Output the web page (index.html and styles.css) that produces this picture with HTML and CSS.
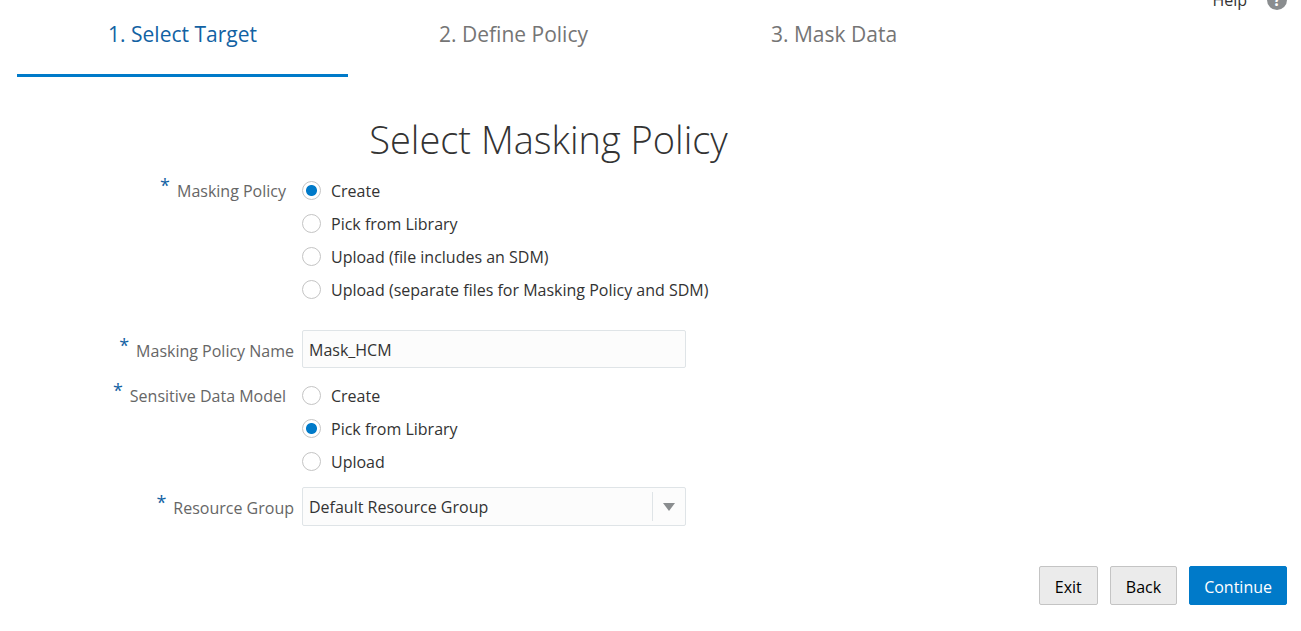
FILE: index.html
```html
<!DOCTYPE html>
<html lang="en">
<head>
<meta charset="utf-8">
<title>Select Masking Policy</title>
<link rel="stylesheet" href="styles.css">
</head>
<body>
<header class="topbar">
  <a class="help-link" href="#">Help</a>
  <button class="help-icon" type="button" aria-label="Help topics">?</button>
</header>
<nav class="steps" aria-label="Progress">
  <a class="step step-current" href="#" aria-current="step">1. Select Target</a>
  <a class="step" href="#">2. Define Policy</a>
  <a class="step" href="#">3. Mask Data</a>
</nav>
<main>
  <h1 class="title">Select Masking Policy</h1>
  <form class="form">
    <div class="row" role="radiogroup" aria-labelledby="policy-label">
      <span class="label group-label" id="policy-label"><span class="star">*</span>Masking Policy</span>
      <div class="options">
        <label class="option"><input class="radio" type="radio" name="policy" checked>Create</label>
        <label class="option"><input class="radio" type="radio" name="policy">Pick from Library</label>
        <label class="option"><input class="radio" type="radio" name="policy">Upload (file includes an SDM)</label>
        <label class="option"><input class="radio" type="radio" name="policy">Upload (separate files for Masking Policy and SDM)</label>
      </div>
    </div>
    <div class="row name-row">
      <label class="label" for="policy-name"><span class="star">*</span>Masking Policy Name</label>
      <input class="field" id="policy-name" type="text" value="Mask_HCM">
    </div>
    <div class="row" role="radiogroup" aria-labelledby="model-label">
      <span class="label group-label" id="model-label"><span class="star">*</span>Sensitive Data Model</span>
      <div class="options">
        <label class="option"><input class="radio" type="radio" name="model">Create</label>
        <label class="option"><input class="radio" type="radio" name="model" checked>Pick from Library</label>
        <label class="option"><input class="radio" type="radio" name="model">Upload</label>
      </div>
    </div>
    <div class="row resource-row">
      <label class="label" for="resource"><span class="star">*</span>Resource Group</label>
      <div class="select-box">
        <select class="field" id="resource"><option>Default Resource Group</option></select>
        <span class="select-arrow"><svg width="12" height="8" viewBox="0 0 12 8" aria-hidden="true"><path d="M0 0h12L6 8z" fill="#8a8d8f"/></svg></span>
      </div>
    </div>
    <div class="actions">
      <button class="button" type="button">Exit</button>
      <button class="button" type="button">Back</button>
      <button class="button button-primary" type="submit">Continue</button>
    </div>
  </form>
</main>
</body>
</html>
```
FILE: styles.css
```css
* { box-sizing: border-box; }

body {
  margin: 0;
  background: #fff;
  color: #333;
  font-family: "Open Sans", "Noto Sans", sans-serif;
  font-size: 16px;
  line-height: 24px;
}

.topbar {
  display: flex;
  justify-content: flex-end;
  align-items: flex-end;
  gap: 20px;
  height: 12px;
  padding-right: 14px;
  overflow: hidden;
}

.help-link { color: #333; text-decoration: none; }

.help-icon {
  width: 20px;
  height: 20px;
  margin-bottom: 2px;
  padding: 0;
  border: 0;
  border-radius: 50%;
  background: #8a8d8f;
  color: #fff;
  font: bold 16px/20px "Open Sans", sans-serif;
}

.steps {
  display: grid;
  grid-template-columns: 331fr 331fr 310fr;
  width: 75%;
  max-width: 972px;
  margin-left: 17px;
}

.step {
  padding: 8px 0 26px;
  border-bottom: 3px solid transparent;
  color: #757575;
  font-size: 21px;
  line-height: 28px;
  text-align: center;
  text-decoration: none;
}

.step-current { border-color: #007ac9; color: #1262a3; }

.title {
  max-width: 1097px;
  margin: 34px 0 7px;
  font-size: 38px;
  font-weight: 300;
  line-height: 56px;
  text-align: center;
}

.row {
  display: grid;
  grid-template-columns: 302px minmax(0, 1fr);
}

.name-row { margin: 24px 0 11px; }
.resource-row { margin-top: 9px; }

.label {
  display: flex;
  justify-content: flex-end;
  gap: 7px;
  padding: 5px 8px 0 0;
  color: #666;
}

.group-label { padding-right: 16px; }
.name-row .label, .resource-row .label { padding-top: 9px; }

.star { color: #1262a3; font-size: 18px; line-height: 12px; }

.option {
  display: flex;
  align-items: center;
  gap: 10px;
  width: fit-content;
  height: 33px;
}

.radio {
  width: 19px;
  height: 19px;
  margin: 0;
  border: 1px solid #c4c4c4;
  border-radius: 50%;
  background: #fff;
  appearance: none;
}

.radio:checked { background: radial-gradient(circle, #007ac9 5px, #fff 6px); }

.field {
  width: 100%;
  max-width: 384px;
  height: 38px;
  padding: 1px 6px 0;
  border: 1px solid #dfe4e7;
  border-radius: 2px;
  background: #fcfcfc;
  color: #333;
  font: inherit;
  appearance: none;
}

.select-box { position: relative; max-width: 384px; }
.select-box .field { display: block; height: 39px; padding-top: 0; }

.select-arrow {
  position: absolute;
  top: 5px;
  right: 1px;
  bottom: 5px;
  display: flex;
  align-items: center;
  justify-content: center;
  width: 33px;
  border-left: 1px solid #dfe4e7;
  pointer-events: none;
}

.actions {
  display: flex;
  justify-content: flex-end;
  gap: 12px;
  margin-top: 40px;
  padding-right: 14px;
}

.button {
  height: 39px;
  padding: 2px 15px 0;
  border: 1px solid #c4c4c4;
  border-radius: 2px;
  background: #ebebeb;
  color: #000;
  font: inherit;
}

.button-primary { padding: 2px 14px 0; border-color: #007ac9; background: #007ac9; color: #fff; }
```
